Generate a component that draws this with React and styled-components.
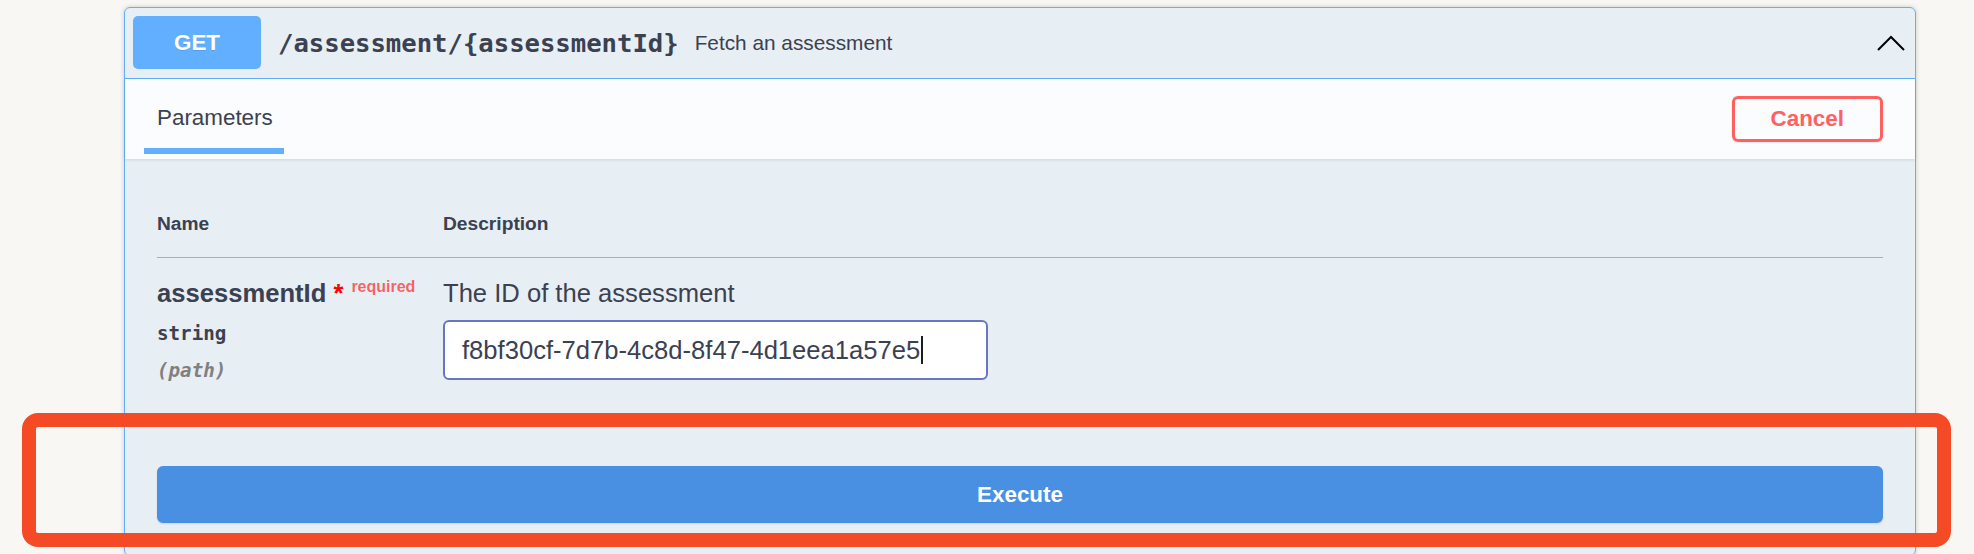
import React from "react";
import styled, { createGlobalStyle } from "styled-components";

const GlobalStyle = createGlobalStyle`
  html, body { margin: 0; padding: 0; overflow: hidden; background: #f8f7f3; }
  body { font-family: "Liberation Sans", Arial, sans-serif; color: #3b4151; }
  * { box-sizing: border-box; }
`;

const Page = styled.div`
  position: relative;
  height: 554px;
  padding: 7px 58px 0 124px;
`;

const OpBlock = styled.section`
  border: 1px solid #61affe;
  border-radius: 6px;
  background: rgba(97, 175, 254, 0.1);
  box-shadow: 0 0 5px rgba(0, 0, 0, 0.19);
`;

const Summary = styled.div`
  display: flex;
  align-items: center;
  padding: 8px 8px 9px;
  border-bottom: 1px solid #61affe;
`;

const MethodBadge = styled.span`
  display: inline-flex;
  align-items: center;
  justify-content: center;
  width: 128px;
  height: 53px;
  border-radius: 5px;
  background: #61affe;
  color: #fff;
  font-size: 22.4px;
  font-weight: 700;
  text-shadow: 0 1px 0 rgba(0, 0, 0, 0.1);
`;

const PathText = styled.span`
  font-family: "DejaVu Sans Mono", monospace;
  font-weight: 700;
  font-size: 25.6px;
  color: #3b4151;
  padding: 0 16px 0 17px;
`;

const SummaryDesc = styled.span`
  font-size: 20.8px;
  color: #3b4151;
`;

const Toggle = styled.span`
  margin-left: auto;
  display: flex;
  padding-right: 2px;
`;

const SectionHeader = styled.div`
  position: relative;
  z-index: 1;
  display: flex;
  align-items: center;
  justify-content: space-between;
  height: 80px;
  padding: 0 32px;
  background: rgba(255, 255, 255, 0.8);
  box-shadow: 0 1px 3px rgba(0, 0, 0, 0.1);
`;

const Tab = styled.h4`
  position: relative;
  margin: 0 0 2px;
  font-size: 22.4px;
  font-weight: 500;
  line-height: 26px;
  color: #3b4151;

  &::after {
    content: "";
    position: absolute;
    left: -11%;
    width: 121%;
    bottom: -23px;
    height: 6px;
    background: #61affe;
  }
`;

const CancelButton = styled.button`
  font-family: "Liberation Sans", Arial, sans-serif;
  font-weight: 700;
  font-size: 22.4px;
  line-height: 26px;
  color: #ff6060;
  background: transparent;
  border: 3px solid #ff6060;
  border-radius: 6px;
  padding: 7px 36px;
  box-shadow: 0 1px 2px rgba(0, 0, 0, 0.1);
`;

const TableContainer = styled.div`
  padding: 32px 32px;
`;

const ParamTable = styled.table`
  width: 100%;
  border-collapse: collapse;
  table-layout: fixed;
`;

const HeadCell = styled.th`
  text-align: left;
  width: ${(p) => (p.$w ? p.$w : "auto")};
  font-size: 19.2px;
  line-height: 22px;
  font-weight: 700;
  color: #3b4151;
  padding: 22px 0 22px;
  border-bottom: 1px solid rgba(59, 65, 81, 0.2);
`;

const Cell = styled.td`
  vertical-align: top;
  padding: 21px 0 20px;
`;

const ParamName = styled.div`
  font-size: 25.6px;
  line-height: 29px;
  font-weight: 700;
  color: #3b4151;
  white-space: nowrap;
`;

const Star = styled.span`
  color: red;
`;

const RequiredTag = styled.span`
  position: relative;
  top: -9.6px;
  padding: 0 8px;
  font-size: 16px;
  font-weight: 700;
  color: rgba(255, 0, 0, 0.6);
`;

const ParamType = styled.div`
  margin-top: 12px;
  font-family: "DejaVu Sans Mono", monospace;
  font-weight: 600;
  font-size: 19.2px;
  line-height: 22px;
  color: #3b4151;
`;

const ParamIn = styled.div`
  margin-top: 15px;
  font-family: "DejaVu Sans Mono", monospace;
  font-style: italic;
  font-weight: 600;
  font-size: 19.2px;
  line-height: 22px;
  color: gray;
`;

const DescText = styled.p`
  margin: 0;
  font-size: 25.6px;
  line-height: 29px;
  color: #3b4151;
`;

const InputBox = styled.div`
  display: flex;
  align-items: center;
  margin-top: 12px;
  width: 545px;
  height: 60px;
  padding: 0 16px 0 17px;
  border: 2px solid #6676c0;
  border-radius: 6px;
  background: #fff;
  font-size: 25.6px;
  line-height: 29px;
  color: #3b4151;
`;

const Caret = styled.span`
  display: inline-block;
  width: 1.5px;
  height: 28px;
  margin-left: 1px;
  background: #1d1d1d;
`;

const ExecuteWrapper = styled.div`
  padding: 32px;
`;

const ExecuteButton = styled.button`
  display: block;
  width: 100%;
  font-family: "Liberation Sans", Arial, sans-serif;
  font-weight: 700;
  font-size: 22.4px;
  line-height: 27px;
  color: #fff;
  background: #4990e2;
  border: 3px solid #4990e2;
  border-radius: 6px;
  padding: 12px;
  box-shadow: 0 1px 2px rgba(0, 0, 0, 0.1);
`;

const Annotation = styled.div`
  position: absolute;
  left: 22px;
  top: 413px;
  width: 1929px;
  height: 134px;
  border: 14px solid #f44a26;
  border-radius: 16px;
  pointer-events: none;
`;

export default function App() {
  return (
    <>
      <GlobalStyle />
      <Page>
        <OpBlock>
          <Summary>
            <MethodBadge>GET</MethodBadge>
            <PathText>/assessment/{"{assessmentId}"}</PathText>
            <SummaryDesc>Fetch an assessment</SummaryDesc>
            <Toggle>
              <svg width="28" height="16" viewBox="0 0 28 16">
                <polyline points="1,15 14,2 27,15" fill="none" stroke="#000" strokeWidth="2" />
              </svg>
            </Toggle>
          </Summary>
          <SectionHeader>
            <Tab>Parameters</Tab>
            <CancelButton>Cancel</CancelButton>
          </SectionHeader>
          <TableContainer>
            <ParamTable>
              <thead>
                <tr>
                  <HeadCell $w="286px">Name</HeadCell>
                  <HeadCell>Description</HeadCell>
                </tr>
              </thead>
              <tbody>
                <tr>
                  <Cell>
                    <ParamName>
                      assessmentId<Star> *</Star>
                      <RequiredTag>required</RequiredTag>
                    </ParamName>
                    <ParamType>string</ParamType>
                    <ParamIn>(path)</ParamIn>
                  </Cell>
                  <Cell>
                    <DescText>The ID of the assessment</DescText>
                    <InputBox>
                      f8bf30cf-7d7b-4c8d-8f47-4d1eea1a57e5
                      <Caret />
                    </InputBox>
                  </Cell>
                </tr>
              </tbody>
            </ParamTable>
          </TableContainer>
          <ExecuteWrapper>
            <ExecuteButton>Execute</ExecuteButton>
          </ExecuteWrapper>
        </OpBlock>
        <Annotation />
      </Page>
    </>
  );
}
